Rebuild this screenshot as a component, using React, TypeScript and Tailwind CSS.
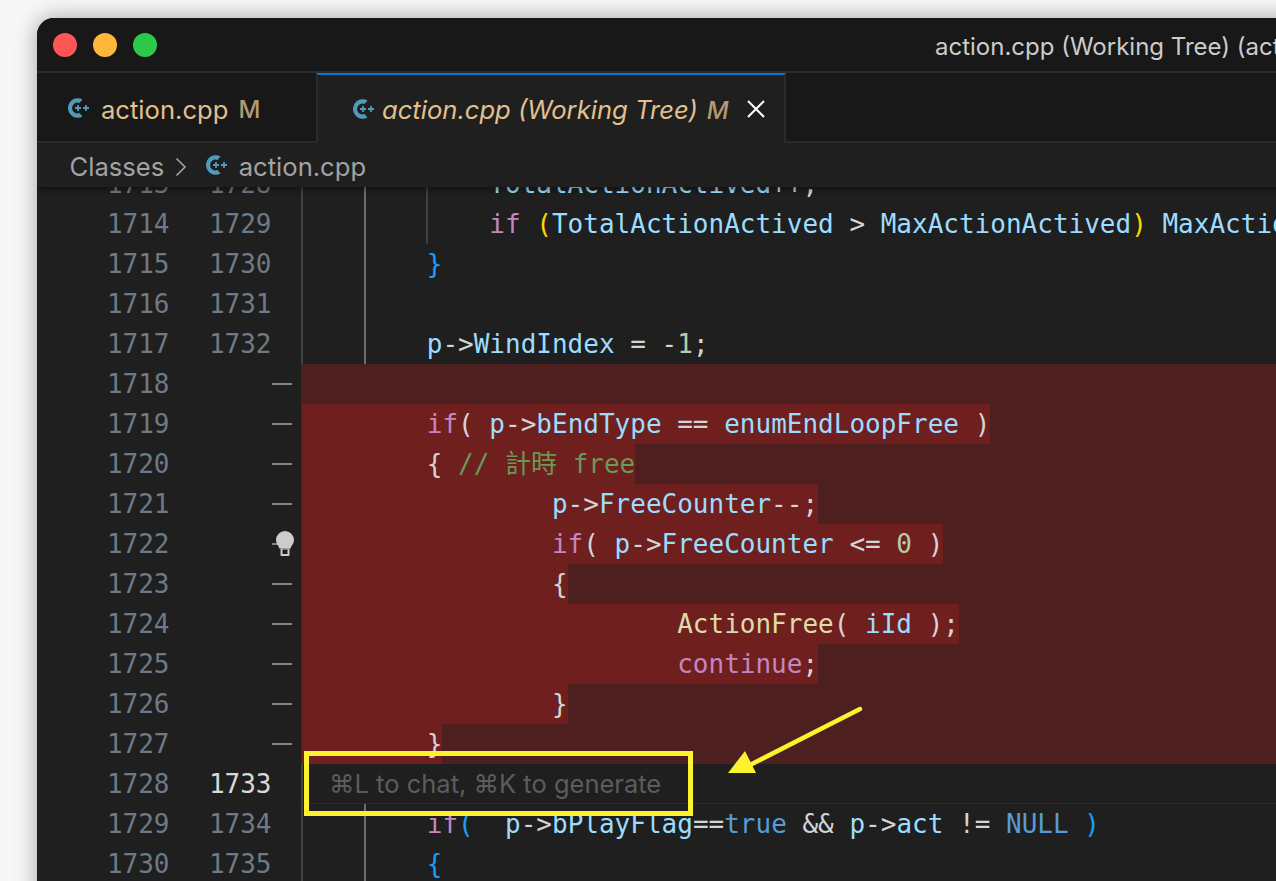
import type { ReactNode } from 'react';

const kw = 'text-[#c586c0]';
const vr = 'text-[#9cdcfe]';
const pl = 'text-[#d4d4d4]';
const fn = 'text-[#dcdcaa]';
const nm = 'text-[#b5cea8]';
const cn = 'text-[#569cd6]';
const cm = 'text-[#6a9955]';
const yb = 'text-[#ffd700]';
const bb = 'text-[#179fff]';

type Token = [string, string];

type Line = {
  left: string;
  right?: string;
  activeRight?: boolean;
  guides?: number[];
  removed?: boolean; // red row
  bright?: boolean; // bright part of the red row sits round the code
  tokens?: Token[];
  hint?: boolean;
};

const lines: Line[] = [
  { left: '1713', right: '1728', guides: [1, 2, 3], tokens: [[pl, '            '], [vr, 'TotalActionActived'], [pl, '++;']] },
  {
    left: '1714',
    right: '1729',
    guides: [1, 2, 3],
    tokens: [
      [pl, '            '],
      [kw, 'if'],
      [pl, ' '],
      [yb, '('],
      [vr, 'TotalActionActived'],
      [pl, ' > '],
      [vr, 'MaxActionActived'],
      [yb, ')'],
      [pl, ' '],
      [vr, 'MaxActionActived'],
      [pl, ' = '],
      [vr, 'TotalActionActived'],
      [pl, ';'],
    ],
  },
  { left: '1715', right: '1730', guides: [1, 2], tokens: [[pl, '        '], [bb, '}']] },
  { left: '1716', right: '1731', guides: [1, 2] },
  {
    left: '1717',
    right: '1732',
    guides: [1, 2],
    tokens: [[pl, '        '], [vr, 'p'], [pl, '->'], [vr, 'WindIndex'], [pl, ' = -'], [nm, '1'], [pl, ';']],
  },
  { left: '1718', removed: true },
  {
    left: '1719',
    removed: true,
    bright: true,
    tokens: [
      [pl, '        '],
      [kw, 'if'],
      [pl, '( '],
      [vr, 'p'],
      [pl, '->'],
      [vr, 'bEndType'],
      [pl, ' == '],
      [vr, 'enumEndLoopFree'],
      [pl, ' )'],
    ],
  },
  { left: '1720', removed: true, bright: true, tokens: [[pl, '        { '], [cm, '// 計時 free']] },
  {
    left: '1721',
    removed: true,
    bright: true,
    tokens: [[pl, '                '], [vr, 'p'], [pl, '->'], [vr, 'FreeCounter'], [pl, '--;']],
  },
  {
    left: '1722',
    removed: true,
    bright: true,
    tokens: [
      [pl, '                '],
      [kw, 'if'],
      [pl, '( '],
      [vr, 'p'],
      [pl, '->'],
      [vr, 'FreeCounter'],
      [pl, ' <= '],
      [nm, '0'],
      [pl, ' )'],
    ],
  },
  { left: '1723', removed: true, bright: true, tokens: [[pl, '                {']] },
  {
    left: '1724',
    removed: true,
    bright: true,
    tokens: [[pl, '                        '], [fn, 'ActionFree'], [pl, '( '], [vr, 'iId'], [pl, ' );']],
  },
  { left: '1725', removed: true, bright: true, tokens: [[pl, '                        '], [kw, 'continue'], [pl, ';']] },
  { left: '1726', removed: true, bright: true, tokens: [[pl, '                }']] },
  { left: '1727', removed: true, bright: true, tokens: [[pl, '        }']] },
  { left: '1728', right: '1733', activeRight: true, hint: true, guides: [1] },
  {
    left: '1729',
    right: '1734',
    guides: [1, 2],
    tokens: [
      [pl, '        '],
      [kw, 'if'],
      [bb, '('],
      [pl, '  '],
      [vr, 'p'],
      [pl, '->'],
      [vr, 'bPlayFlag'],
      [pl, '=='],
      [cn, 'true'],
      [pl, ' && '],
      [vr, 'p'],
      [pl, '->'],
      [vr, 'act'],
      [pl, ' != '],
      [cn, 'NULL'],
      [pl, ' '],
      [bb, ')'],
    ],
  },
  { left: '1730', right: '1735', guides: [1, 2], tokens: [[pl, '        '], [bb, '{']] },
];

function CppIcon() {
  return (
    <svg width="24" height="20" viewBox="0 0 24 20" className="shrink-0">
      <path d="M15.5 1.4A9.8 9.8 0 1 0 15.5 18.6L12.5 15A5.4 5.4 0 1 1 12.5 5Z" fill="#519aba" />
      <path d="M8 10h6M11 7v6M16 10h6M19 7v6" fill="none" stroke="#519aba" strokeWidth="1.8" />
    </svg>
  );
}

function Bulb() {
  return (
    <svg width="20" height="26" viewBox="0 0 20 26" className="absolute left-[238px] top-[7px]">
      <path d="M10 0a9 9 0 0 1 9 9c0 3.6-2.6 5.4-3.4 8.5H4.4C3.6 14.4 1 12.6 1 9a9 9 0 0 1 9-9z" fill="#cccccc" />
      <path d="M5.5 17.5h9v6.5a1 1 0 0 1-1 1h-7a1 1 0 0 1-1-1z" fill="#cccccc" />
      <rect x="7.5" y="18.5" width="5" height="4.5" fill="#1f1f1f" />
    </svg>
  );
}

function Code({ tokens }: { tokens: Token[] }): ReactNode {
  return tokens.map(([color, text], i) => (
    <span key={i} className={color}>
      {text}
    </span>
  ));
}

function Row({ line }: { line: Line }) {
  const rowBg = line.removed ? 'bg-[#4e1f1f]' : '';
  return (
    <div className="flex h-10 leading-10">
      <div className="relative flex w-[264px] shrink-0">
        <span className="w-[132.5px] text-right text-[#6e7a85]">{line.left}</span>
        <span className={`w-[102px] text-right ${line.activeRight ? 'text-[#d8d8d8]' : 'text-[#6e7a85]'}`}>
          {line.right}
        </span>
        {line.removed && <span className="mt-[19px] ml-[0.5px] h-[2px] w-5 bg-[#858585]" />}
        {line.left === '1722' && <Bulb />}
      </div>
      <div
        className={`relative min-w-0 flex-1 overflow-hidden whitespace-pre pl-[0.5px] ${rowBg} ${
          line.hint ? 'border-b border-[#2c2c2c]' : ''
        }`}
      >
        {line.guides?.includes(1) && <span className="absolute top-0 bottom-0 left-0 w-[2px] bg-[#424242]" />}
        {line.guides?.includes(2) && !line.hint && (
          <span className="absolute top-0 bottom-0 left-[63px] w-[2px] bg-[#6e6e6e]" />
        )}
        {line.guides?.includes(3) && <span className="absolute top-0 bottom-0 left-[125px] w-[2px] bg-[#404040]" />}
        {line.bright && line.tokens ? (
          <span className="inline-block h-10 bg-[#701f1f] align-top">
            <Code tokens={line.tokens} />
          </span>
        ) : line.tokens ? (
          <span className="relative">
            <Code tokens={line.tokens} />
          </span>
        ) : null}
        {line.hint && (
          <span className="ml-[27.5px] font-['Inter',sans-serif] text-[25.5px] text-[#5c5c5c]">
            ⌘L to chat, ⌘K to generate
          </span>
        )}
      </div>
    </div>
  );
}

export default function App() {
  return (
    <div className="relative h-[881px] w-[1276px] overflow-hidden bg-[#f7f7f7] pt-[18px] pl-[37px]">
      <div className="h-[900px] w-[1300px] overflow-hidden rounded-tl-[17px] bg-[#1f1f1f] shadow-[0_0_22px_rgba(0,0,0,0.35)]">
        {/* title bar */}
        <div className="flex h-[55px] items-center border-b-2 border-[#2b2b2b] bg-[#181818] pl-4 font-['Inter',sans-serif]">
          <div className="flex gap-4">
            <span className="h-6 w-6 rounded-full bg-[#ff5555]" />
            <span className="h-6 w-6 rounded-full bg-[#ffb73a]" />
            <span className="h-6 w-6 rounded-full bg-[#2cc84a]" />
          </div>
          <span className="ml-[778px] whitespace-pre pt-1 text-[24px] text-[#cccccc]">action.cpp (Working Tree) (action.cpp)</span>
        </div>

        {/* tabs */}
        <div className="flex h-[70px] bg-[#181818] font-['Inter',sans-serif] text-[25.6px] text-[#e2c08d]">
          <div className="flex w-[279px] items-center border-b-2 border-[#2b2b2b] pt-px pl-[30px]">
            <CppIcon />
            <span className="ml-[10px] pt-[5px]">action.cpp</span>
            <span className="ml-[10px] pt-[5px] text-[24px] font-medium text-[#b39a72]">M</span>
          </div>
          <div className="flex w-[470px] items-center border-x-2 border-t-2 border-x-[#2b2b2b] border-t-[#0078d4] bg-[#1f1f1f] pl-[34px]">
            <CppIcon />
            <span className="ml-[6px] pt-[3px] italic">action.cpp (Working Tree)</span>
            <span className="ml-[9px] pt-[3px] text-[24px] font-medium text-[#b39a72] italic">M</span>
            <svg width="18" height="18" viewBox="0 0 18 18" className="ml-[18px]">
              <path d="M1 1l16 16M17 1L1 17" stroke="#ffffff" strokeWidth="2" />
            </svg>
          </div>
          <div className="flex-1 border-b-2 border-[#2b2b2b]" />
        </div>

        {/* breadcrumbs */}
        <div className="relative z-10 flex h-[44px] items-center bg-[#1f1f1f] pl-[32.5px] font-['Inter',sans-serif] text-[25.6px] text-[#a3a3a3] shadow-[0_3px_5px_rgba(0,0,0,0.4)]">
          <span className="pt-[5px]">Classes</span>
          <svg width="12" height="20" viewBox="0 0 12 20" className="mt-1 mr-[18px] ml-[10.5px]">
            <path d="M1.5 1.5L10 10l-8.5 8.5" fill="none" stroke="#a3a3a3" strokeWidth="1.6" />
          </svg>
          <CppIcon />
          <span className="ml-[10px] pt-[5px]">action.cpp</span>
        </div>

        {/* diff editor, scrolled part way through line 1713 */}
        <div className="-mt-[23px] font-['DejaVu_Sans_Mono','Noto_Sans_CJK_TC',monospace] text-[26px]">
          {lines.map((line) => (
            <Row key={line.left} line={line} />
          ))}
        </div>
      </div>

      {/* yellow annotation over the screenshot */}
      <div className="absolute top-[751px] left-[304px] h-[65px] w-[389px] border-[5px] border-[#fdf22f]" />
      <svg width="150" height="80" viewBox="0 0 150 80" className="absolute top-[700px] left-[720px]">
        <path d="M140 9L28 66" stroke="#fdf22f" strokeWidth="4.5" strokeLinecap="round" />
        <path d="M8 73L25 51L36 73z" fill="#fdf22f" />
      </svg>
    </div>
  );
}
